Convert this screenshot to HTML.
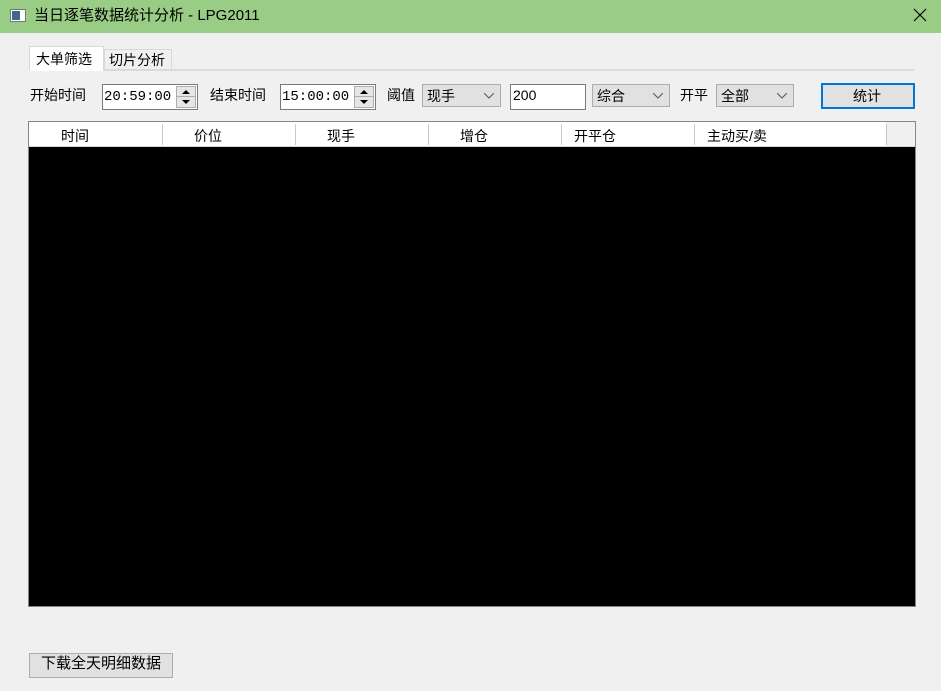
<!DOCTYPE html>
<html><head><meta charset="utf-8"><style>
*{margin:0;padding:0;box-sizing:border-box}
body{width:941px;height:691px;background:#f0f0f0;position:relative;overflow:hidden;font-family:"Liberation Sans","Noto Sans CJK SC",sans-serif;font-size:14px;color:#000}
.a{position:absolute}
.t{position:absolute;line-height:20px;white-space:nowrap}
.box{position:absolute;background:#fff;border:1px solid #7a7a7a}
.cb{position:absolute;background:#e1e1e1;border:1px solid #adadad}
.cb span{position:absolute;left:4px;top:1px;line-height:20px}
.cb svg{position:absolute;right:6px;top:8px}
.hd{position:absolute;top:2px;height:24px;line-height:24px}
.sep{position:absolute;top:2px;width:1px;height:21px;background:#c8c8c8}
</style></head><body>
<div class="a" style="left:0;top:0;width:941px;height:33px;background:#99cc85"></div>
<div class="a" style="left:10px;top:9px;width:16px;height:13px;border:1px solid #777;background:#fff"></div>
<div class="a" style="left:12px;top:11px;width:8px;height:9px;background:#3c6a8a"></div>
<div class="t" style="left:34px;top:6px;font-size:15px">当日逐笔数据统计分析 - LPG2011</div>
<svg class="a" style="left:913px;top:8px" width="14" height="14"><path d="M1 1L13 13M13 1L1 13" stroke="#000" stroke-width="1.2"/></svg>

<div class="a" style="left:29px;top:69px;width:885px;height:2px;background:#dadada"></div>
<div class="a" style="left:104px;top:49px;width:68px;height:21px;border:1px solid #d9d9d9;background:#f0f0f0"></div>
<div class="t" style="left:109px;top:50px">切片分析</div>
<div class="a" style="left:29px;top:46px;width:75px;height:25px;background:#fff;border:1px solid #d9d9d9;border-bottom:none"></div>
<div class="t" style="left:36px;top:49px">大单筛选</div>

<div class="t" style="left:30px;top:85px">开始时间</div>
<div class="box" style="left:102px;top:84px;width:96px;height:26px"></div>
<div class="t" style="left:104px;top:87px;font-family:'Liberation Mono',monospace">20:59:00</div>
<div class="a" style="left:176px;top:86px;width:20px;height:22px;background:#e6e6e6;border:1px solid #adadad"></div>
<div class="a" style="left:177px;top:96px;width:18px;height:1px;background:#adadad"></div>
<svg class="a" style="left:181px;top:89px" width="10" height="17"><path d="M1 5L5 1L9 5Z M1 11L5 15L9 11Z" fill="#000"/></svg>

<div class="t" style="left:210px;top:85px">结束时间</div>
<div class="box" style="left:280px;top:84px;width:96px;height:26px"></div>
<div class="t" style="left:282px;top:87px;font-family:'Liberation Mono',monospace">15:00:00</div>
<div class="a" style="left:354px;top:86px;width:20px;height:22px;background:#e6e6e6;border:1px solid #adadad"></div>
<div class="a" style="left:355px;top:96px;width:18px;height:1px;background:#adadad"></div>
<svg class="a" style="left:359px;top:89px" width="10" height="17"><path d="M1 5L5 1L9 5Z M1 11L5 15L9 11Z" fill="#000"/></svg>

<div class="t" style="left:387px;top:85px">阈值</div>
<div class="cb" style="left:422px;top:84px;width:79px;height:23px"><span>现手</span><svg width="10" height="6"><path d="M0 0L5 5L10 0" stroke="#555" fill="none"/></svg></div>
<div class="box" style="left:510px;top:84px;width:76px;height:26px"></div>
<div class="t" style="left:513px;top:85px">200</div>
<div class="cb" style="left:592px;top:84px;width:78px;height:23px"><span>综合</span><svg width="10" height="6"><path d="M0 0L5 5L10 0" stroke="#555" fill="none"/></svg></div>
<div class="t" style="left:680px;top:85px">开平</div>
<div class="cb" style="left:716px;top:84px;width:78px;height:23px"><span>全部</span><svg width="10" height="6"><path d="M0 0L5 5L10 0" stroke="#555" fill="none"/></svg></div>
<div class="a" style="left:821px;top:83px;width:94px;height:26px;background:#e1e1e1;border:2px solid #0078d7"></div>
<div class="t" style="left:853px;top:86px">统计</div>

<div class="a" style="left:28px;top:121px;width:888px;height:486px;border:1px solid #828790;background:#000">
<div class="a" style="left:0;top:0;width:886px;height:25px;background:#f0f0f0;border-bottom:1px solid #d5d5d5">
<div class="a" style="left:0;top:0;width:857px;height:24px;background:#fff;"></div>
<div class="hd" style="left:32px">时间</div><div class="sep" style="left:133px"></div>
<div class="hd" style="left:165px">价位</div><div class="sep" style="left:266px"></div>
<div class="hd" style="left:298px">现手</div><div class="sep" style="left:399px"></div>
<div class="hd" style="left:431px">增仓</div><div class="sep" style="left:532px"></div>
<div class="hd" style="left:545px">开平仓</div><div class="sep" style="left:665px"></div>
<div class="hd" style="left:678px">主动买/卖</div><div class="sep" style="left:857px"></div>
</div>
</div>

<div class="a" style="left:29px;top:653px;width:144px;height:25px;background:#e1e1e1;border:1px solid #adadad"></div>
<div class="t" style="left:41px;top:654px;font-size:15px">下载全天明细数据</div>
</body></html>
